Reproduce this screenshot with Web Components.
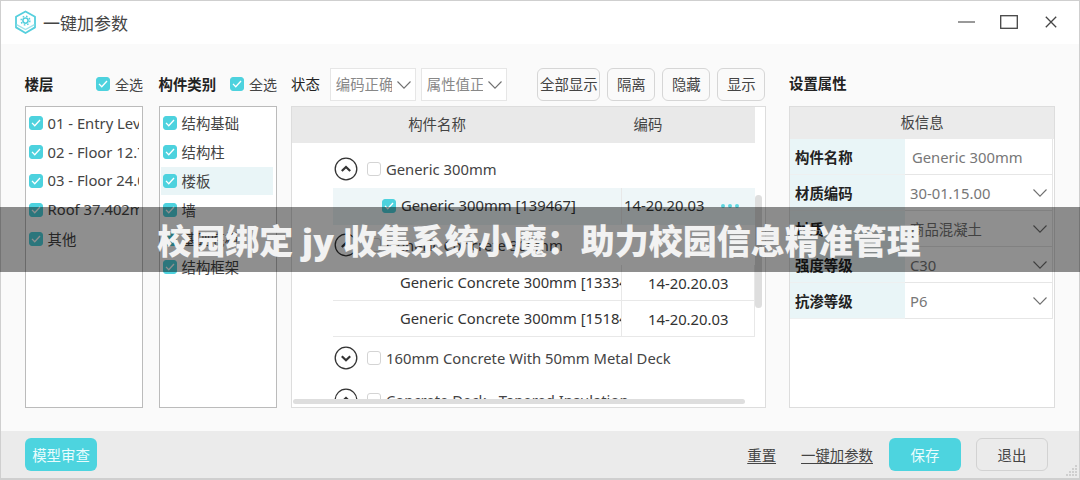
<!DOCTYPE html>
<html>
<head>
<meta charset="utf-8">
<style>
  html, body { margin: 0; height: 100%; overflow: hidden; }
  body { font-family: "Noto Sans", "Noto Sans CJK SC", sans-serif; font-size: 14.4px; color: #333; }
  .lt { font-size: 14.8px; }
</style>
</head>
<body>
<param-window>
  <title-bar slot="title"></title-bar>

  <tree-col slot="floors" heading="楼层">
    <check-item class="lt" checked>01 - Entry Level 0.000</check-item>
    <check-item class="lt" checked>02 - Floor 12.701</check-item>
    <check-item class="lt" checked>03 - Floor 24.000</check-item>
    <check-item class="lt" checked>Roof 37.402m</check-item>
    <check-item checked>其他</check-item>
  </tree-col>

  <tree-col slot="types" heading="构件类别">
    <check-item checked>结构基础</check-item>
    <check-item checked>结构柱</check-item>
    <check-item checked active>楼板</check-item>
    <check-item checked>墙</check-item>
    <check-item checked>基础底板</check-item>
    <check-item checked>结构框架</check-item>
  </tree-col>

  <part-table slot="table"></part-table>
  <prop-panel slot="props"></prop-panel>
  <foot-bar slot="foot"></foot-bar>
</param-window>
<title-banner>校园绑定 jy 收集系统小魔：助力校园信息精准管理</title-banner>

<script>
const CHEVRON = `<svg width="16" height="10" viewBox="0 0 16 10" fill="none" stroke="#707070" stroke-width="1.1"><path d="M1.5 1.5 8 8.2l6.5-6.7"/></svg>`;

// Window frame
class ParamWindow extends HTMLElement {
  constructor() {
    super();
    this.attachShadow({ mode: 'open' });
    this.shadowRoot.innerHTML = `
      <style>
        :host { display: flex; flex-direction: column; box-sizing: border-box; width: 1080px; height: 480px; background: #fafafa; border: 1px solid #cfcfcf; border-width: 1px 1px 2px 1px; }
        .main { flex: 1; display: flex; padding: 24px 24px 23px 24px; min-height: 0; }
        ::slotted([slot="floors"]) { width: 118px; margin-right: 16px; }
        ::slotted([slot="types"]) { width: 118px; margin-right: 14px; }
        ::slotted([slot="table"]) { width: 475px; margin-right: 23px; }
        ::slotted([slot="props"]) { width: 266px; }
      </style>
      <slot name="title"></slot>
      <div class="main">
        <slot name="floors"></slot>
        <slot name="types"></slot>
        <slot name="table"></slot>
        <slot name="props"></slot>
      </div>
      <slot name="foot"></slot>`;
  }
}

class TitleBar extends HTMLElement {
  constructor() {
    super();
    this.attachShadow({ mode: 'open' });
    this.shadowRoot.innerHTML = `
      <style>
        :host { display: flex; align-items: center; height: 43px; flex: none; background: #fff; padding: 0 22px 0 13px; }
        .name { font-size: 17px; color: #444; margin-left: 6px; flex: 1; }
        svg { display: block; }
        .ctl { display: flex; align-items: center; margin-top: -2px; }
      </style>
      <svg width="23" height="25" viewBox="0 0 23 25" fill="none" stroke="#55cfdd">
        <path d="M11.5 1.5 21 6.8v10.6l-9.5 5.6L2 17.4V6.8z" stroke-width="1.8" stroke-linejoin="round"/>
        <path d="M2.6 14.6l8.9 5 8.9-5" stroke-width="1.3" stroke="#9fe3ea"/>
        <circle cx="11.5" cy="10.6" r="2.6" stroke-width="1.6"/>
        <circle cx="11.5" cy="10.6" r="4.4" stroke-width="1.4" stroke-dasharray="1.6 1.85"/>
      </svg>
      <span class="name">一键加参数</span>
      <div class="ctl">
        <svg width="18" height="14" viewBox="0 0 18 14" stroke="#555" fill="none" stroke-width="1.2"><path d="M0 7h17"/></svg>
        <svg style="margin-left:24px" width="18" height="14" viewBox="0 0 18 14" stroke="#444" fill="none" stroke-width="1.3"><rect x=".7" y=".7" width="16.6" height="12.6"/></svg>
        <svg style="margin-left:27px" width="12" height="12" viewBox="0 0 12 12" stroke="#444" fill="none" stroke-width="1.3"><path d="M.8.8l10.4 10.4M11.2.8.8 11.2"/></svg>
      </div>`;
  }
}

// Checkbox with label, used by the lists and the tree rows
class CheckItem extends HTMLElement {
  constructor() {
    super();
    this.attachShadow({ mode: 'open' });
    this.shadowRoot.innerHTML = `
      <style>
        :host { display: flex; align-items: center; height: 28.8px; flex: none; padding-left: 2px; white-space: nowrap; overflow: hidden; color: #444; }
        :host([active]) { background: #e9f5f7; }
        .box { flex: none; box-sizing: border-box; width: 14px; height: 14px; border-radius: 3px; margin-right: 5px; background: #fff; border: 1px solid #d4d4d4; display: flex; align-items: center; justify-content: center; }
        :host([checked]) .box { background: #4dd2de; border-color: #4dd2de; }
        svg { display: none; }
        :host([checked]) svg { display: block; }
        .t { margin-top: -1px; }
      </style>
      <span class="box"><svg width="10" height="8" viewBox="0 0 11 9" fill="none" stroke="#fff" stroke-width="1.5"><path d="M1 4.4 4.1 7.6 10 1.2"/></svg></span>
      <span class="t"><slot></slot></span>`;
  }
}

// List column with heading and "select all"
class TreeCol extends HTMLElement {
  constructor() {
    super();
    this.attachShadow({ mode: 'open' });
    this.shadowRoot.innerHTML = `
      <style>
        :host { display: flex; flex-direction: column; box-sizing: border-box; flex: none; }
        .head { display: flex; align-items: center; height: 33px; margin-bottom: 5px; flex: none; }
        b { font-weight: 700; flex: 1; color: #222; margin-top: -2px; margin-left: -0.5px; }
        .all { padding: 0; margin-left: 1px; font-size: 14px; }
        .list { flex: 1; box-sizing: border-box; background: #fff; border: 1.5px solid #bbb; padding: 2px 3px 0 0.5px; overflow: hidden; }
      </style>
      <div class="head"><b></b><check-item class="all" checked>全选</check-item></div>
      <div class="list"><slot></slot></div>`;
    this.shadowRoot.querySelector('b').textContent = this.getAttribute('heading');
  }
}

// One rounded toolbar button
class ToolBtn extends HTMLElement {
  constructor() {
    super();
    this.attachShadow({ mode: 'open' });
    this.shadowRoot.innerHTML = `
      <style>
        :host { display: flex; align-items: center; justify-content: center; box-sizing: border-box; flex: none; height: 33px; padding-bottom: 2px; border: 1px solid #d6d6d6; border-radius: 6px; background: #fafafa; color: #444; white-space: nowrap; }
      </style>
      <slot></slot>`;
  }
}

class DropSelect extends HTMLElement {
  constructor() {
    super();
    this.attachShadow({ mode: 'open' });
    this.shadowRoot.innerHTML = `
      <style>
        :host { display: flex; align-items: center; box-sizing: border-box; width: 86.5px; height: 33px; flex: none; background: #fff; border: 1px solid #e6e6e6; padding-left: 5px; color: #888; }
        .t { width: 56px; overflow: hidden; white-space: nowrap; margin-right: 4px; margin-top: -2px; }
      </style>
      <span class="t"><slot></slot></span>${CHEVRON}`;
  }
}

// Middle panel: filters plus the grouped table
class PartTable extends HTMLElement {
  constructor() {
    super();
    this.attachShadow({ mode: 'open' });
    const group = (dir, name, style = '') => `
      <div class="group" style="${style}">
        <svg width="24" height="24" viewBox="0 0 24 24" fill="none" stroke="#333"><circle cx="12" cy="12" r="10.8" stroke-width="1.3"/><path d="${dir === 'up' ? 'M7.8 14l4.2-4 4.2 4' : 'M7.8 10.2l4.2 4 4.2-4'}" stroke-width="2.2"/></svg>
        <check-item class="gc">${name}</check-item>
      </div>`;
    const child = (name, code) => `
      <div class="row"><span class="n">${name}</span><span class="c">${code}</span></div>`;
    this.shadowRoot.innerHTML = `
      <style>
        :host { display: flex; flex-direction: column; box-sizing: border-box; flex: none; }
        .tools { display: flex; align-items: center; height: 33px; margin-bottom: 5px; flex: none; }
        .tools .lbl { margin-right: 10px; color: #222; margin-top: -2px; }
        .tools drop-select + drop-select { margin-left: 4.5px; }
        .b1 { width: 63px; margin-left: 30px; }
        .b2 { width: 48px; margin-left: 7px; }
        .panel { flex: 1; min-height: 0; display: flex; flex-direction: column; position: relative; box-sizing: border-box; background: #fff; border: 1px solid #ddd; }
        .thead { display: flex; flex: none; height: 36px; line-height: 35px; background: #e9e9e9; width: 463px; color: #444; }
        .thead .a { width: 290px; text-align: center; }
        .thead .b { width: 132px; text-align: center; }
        .body { flex: 1; min-height: 0; overflow: hidden; padding-left: 41px; font-size: 14.8px; }
        .group { display: flex; align-items: center; height: 40px; padding-left: 1px; color: #444; }
        .gc { margin-left: 9px; height: 24px; padding: 0; }
        .row { display: flex; align-items: center; width: 422px; box-sizing: border-box; height: 36px; border-bottom: 1px solid #e8e8e8; border-right: 1px solid #e8e8e8; color: #333; }
        .n { box-sizing: border-box; width: 289px; padding-left: 67px; height: 100%; line-height: 35px; overflow: hidden; white-space: nowrap; border-right: 1px solid #e8e8e8; flex: none; }
        .c { margin-left: 26px; white-space: nowrap; }
        .row.sel { background: #eef6f8; height: 37px; border-color: #eef6f8; }
        .row.sel .n { padding-left: 49px; display: flex; align-items: center; }
        .row.sel .c { margin-left: 2px; margin-top: -2px; }
        .sc { height: 24px; padding: 0; color: #333; }
        .dots { margin-left: 17px; display: flex; gap: 3px; }
        .dots i { width: 4px; height: 4px; border-radius: 50%; background: #5ed6e0; }
        .hbar { flex: none; height: 8px; position: relative; }
        .hbar i { position: absolute; left: 1px; top: 0; width: 452px; height: 5px; border-radius: 3px; background: #dedede; }
        .vbar { position: absolute; left: 463px; top: 88px; width: 7px; height: 113px; border-radius: 4px; background: #dedede; }
      </style>
      <div class="tools">
        <span class="lbl">状态</span>
        <drop-select>编码正确</drop-select>
        <drop-select>属性值正确</drop-select>
        <tool-btn class="b1">全部显示</tool-btn>
        <tool-btn class="b2">隔离</tool-btn>
        <tool-btn class="b2">隐藏</tool-btn>
        <tool-btn class="b2">显示</tool-btn>
      </div>
      <div class="panel">
        <div class="thead"><span class="a">构件名称</span><span class="b">编码</span></div>
        <div class="body">
          ${group('up', 'Generic 300mm', 'margin-top:7px;height:38px')}
          <div class="row sel"><span class="n"><check-item class="sc" checked>Generic 300mm [139467]</check-item></span><span class="c">14-20.20.03</span><span class="dots"><i></i><i></i><i></i></span></div>
          ${group('up', 'Generic Concrete 300mm')}
          ${child('Generic Concrete 300mm [133345]', '14-20.20.03')}
          ${child('Generic Concrete 300mm [151845]', '14-20.20.03')}
          ${group('down', '160mm Concrete With 50mm Metal Deck', 'margin-top:1px')}
          ${group('up', 'Concrete Deck - Tapered Insulation', 'margin-top:2px')}
        </div>
        <div class="hbar"><i></i></div>
        <div class="vbar"></div>
      </div>`;
  }
}

// Right panel with the property grid
class PropPanel extends HTMLElement {
  constructor() {
    super();
    this.attachShadow({ mode: 'open' });
    const rows = [
      ['构件名称', 'Generic 300mm', false],
      ['材质编码', '30-01.15.00', true],
      ['材质', '商品混凝土', true],
      ['强度等级', 'C30', true],
      ['抗渗等级', 'P6', true]
    ];
    const html = rows.map(([k, v, drop]) => `
      <div class="k"><span>${k}</span></div>
      <div class="v ${drop ? 'drop' : 'plain'}"><span class="${/[a-z0-9]/i.test(v) ? 'lt' : ''}">${v}</span>${drop ? CHEVRON : ''}</div>`).join('');
    this.shadowRoot.innerHTML = `
      <style>
        :host { display: flex; flex-direction: column; box-sizing: border-box; flex: none; }
        .head { height: 31px; line-height: 31px; margin-bottom: 7px; flex: none; font-weight: 700; color: #222; }
        .box { flex: 1; box-sizing: border-box; background: #fff; border: 1px solid #ddd; }
        .cap { height: 32px; line-height: 31px; text-align: center; background: #ebebeb; color: #444; }
        .grid { display: grid; grid-template-columns: 115px 148px; grid-auto-rows: 36px; }
        .k { display: flex; align-items: center; padding-left: 5px; background: #e9f5f7; font-weight: 700; color: #222; border-bottom: 1px solid #eef0f0; }
        .v { display: flex; align-items: center; justify-content: space-between; padding: 0 4px 0 5px; color: #777; border-bottom: 1px solid #e6e6e6; border-right: 1px solid #e6e6e6; }
        .v.plain { padding-left: 7px; }
        .lt { font-size: 14.8px; }
      </style>
      <div class="head">设置属性</div>
      <div class="box">
        <div class="cap">板信息</div>
        <div class="grid">${html}</div>
      </div>`;
  }
}

// Bottom action bar
class FootBar extends HTMLElement {
  constructor() {
    super();
    this.attachShadow({ mode: 'open' });
    this.shadowRoot.innerHTML = `
      <style>
        :host { display: flex; align-items: center; box-sizing: border-box; position: relative; height: 47px; flex: none; background: #ebebeb; padding: 0 31px 0 24px; color: #444; }
        .btn { display: flex; align-items: center; justify-content: center; width: 72px; height: 33px; border-radius: 6px; box-sizing: border-box; flex: none; }
        .teal { background: #4dd4df; color: #eafcfd; }
        .ghost { border: 1px solid #d2d2d2; margin-left: 15px; }
        .sp { flex: 1; }
        u { margin-right: 25px; text-underline-offset: 2px; }
        u.l { margin-right: 16px; }
        .grip { position: absolute; right: 1px; bottom: 1px; }
      </style>
      <span class="btn teal">模型审查</span>
      <span class="sp"></span>
      <u>重置</u><u class="l">一键加参数</u>
      <span class="btn teal">保存</span>
      <span class="btn ghost">退出</span>
      <svg class="grip" width="13" height="13" viewBox="0 0 13 13" fill="#cfcfcf"><rect x="10" y="1" width="2" height="2"/><rect x="7" y="4" width="2" height="2"/><rect x="10" y="4" width="2" height="2"/><rect x="4" y="7" width="2" height="2"/><rect x="7" y="7" width="2" height="2"/><rect x="10" y="7" width="2" height="2"/><rect x="1" y="10" width="2" height="2"/><rect x="4" y="10" width="2" height="2"/><rect x="7" y="10" width="2" height="2"/><rect x="10" y="10" width="2" height="2"/></svg>`;
  }
}

// Caption strip lying over the screenshot
class TitleBanner extends HTMLElement {
  constructor() {
    super();
    this.attachShadow({ mode: 'open' });
    this.shadowRoot.innerHTML = `
      <style>
        :host { position: absolute; left: 0; top: 207px; width: 1080px; height: 65px; display: flex; align-items: center; justify-content: center; background: rgba(0,0,0,.44); color: #f2f2f2; font: 900 34px "Noto Sans", "Noto Sans CJK SC", sans-serif; white-space: nowrap; }
        span { margin-top: -1px; margin-left: -2px; }
      </style>
      <span><slot></slot></span>`;
  }
}

customElements.define('check-item', CheckItem);
customElements.define('tool-btn', ToolBtn);
customElements.define('drop-select', DropSelect);
customElements.define('title-bar', TitleBar);
customElements.define('tree-col', TreeCol);
customElements.define('part-table', PartTable);
customElements.define('prop-panel', PropPanel);
customElements.define('foot-bar', FootBar);
customElements.define('param-window', ParamWindow);
customElements.define('title-banner', TitleBanner);
</script>
</body>
</html>
